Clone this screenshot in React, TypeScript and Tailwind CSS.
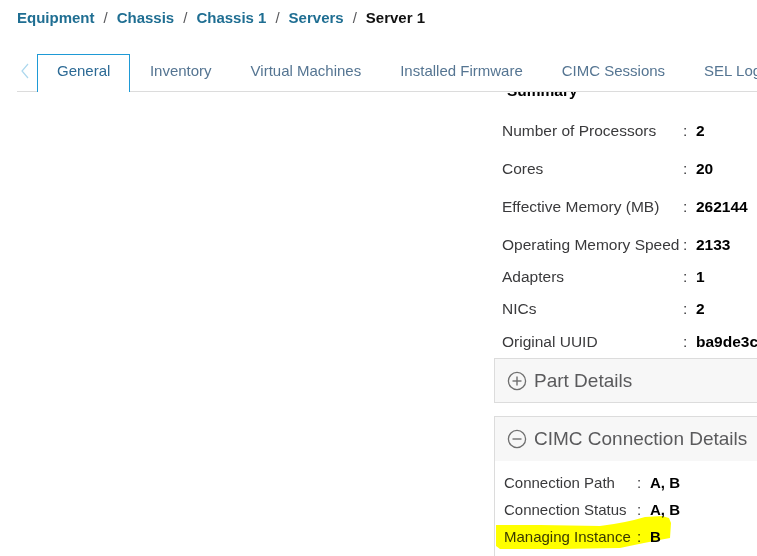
import React from "react";

const tabs = ["General", "Inventory", "Virtual Machines", "Installed Firmware", "CIMC Sessions", "SEL Logs"];

const summary: { label: string; value: string; cls: string }[] = [
  { label: "Number of Processors", value: "2", cls: "mt-[18px]" },
  { label: "Cores", value: "20", cls: "mt-[14px]" },
  { label: "Effective Memory (MB)", value: "262144", cls: "mt-[14px]" },
  { label: "Operating Memory Speed", value: "2133", cls: "mt-[14px]" },
  { label: "Adapters", value: "1", cls: "mt-[8px]" },
  { label: "NICs", value: "2", cls: "mt-[8px]" },
  { label: "Original UUID", value: "ba9de3cd-0000-0000-0000-000000000000", cls: "mt-[9px]" },
];

const cimc = [
  { label: "Connection Path", value: "A, B" },
  { label: "Connection Status", value: "A, B" },
  { label: "Managing Instance", value: "B" },
];

function CircleIcon({ plus }: { plus: boolean }) {
  return (
    <svg width="20" height="20" viewBox="0 0 20 20" className="flex-none">
      <circle cx="10" cy="10" r="8.6" fill="none" stroke="#6f6f6f" strokeWidth="1.3" />
      <line x1="5.5" y1="10" x2="14.5" y2="10" stroke="#6f6f6f" strokeWidth="1.4" />
      {plus && <line x1="10" y1="5.5" x2="10" y2="14.5" stroke="#6f6f6f" strokeWidth="1.4" />}
    </svg>
  );
}

export default function App() {
  return (
    <div className="relative w-[757px] h-[556px] overflow-hidden bg-white font-['Liberation_Sans',Arial,sans-serif]">
      <div className="pl-[17px] w-[1100px]">
        {/* Breadcrumb */}
        <div className="pt-[8px] flex items-center text-[15px] leading-[20px] font-bold">
          <span className="text-[#1f6e92]">Equipment</span>
          <span className="mx-[9px] font-normal text-[#58585b]">/</span>
          <span className="text-[#1f6e92]">Chassis</span>
          <span className="mx-[9px] font-normal text-[#58585b]">/</span>
          <span className="text-[#1f6e92]">Chassis 1</span>
          <span className="mx-[9px] font-normal text-[#58585b]">/</span>
          <span className="text-[#1f6e92]">Servers</span>
          <span className="mx-[9px] font-normal text-[#58585b]">/</span>
          <span className="text-[#111111]">Server 1</span>
        </div>

        {/* Tabs */}
        <div className="mt-[26px] flex items-end border-b border-[#dcdcdc] h-[38px]">
          <div className="w-[20px] h-[37px] flex items-center pb-[3px]">
            <svg width="10" height="16" viewBox="0 0 10 16" className="ml-[3px]">
              <polyline points="8,1 2,8 8,15" fill="none" stroke="#add8ee" strokeWidth="1.2" />
            </svg>
          </div>
          {tabs.map((t, i) =>
            i === 0 ? (
              <div
                key={t}
                className="relative -mb-px h-[38px] px-[19px] pt-[6px] border border-b-0 border-[#1e9ad6] bg-white text-[15px] leading-[20px] text-[#2c6a95] whitespace-nowrap"
              >
                {t}
              </div>
            ) : (
              <div
                key={t}
                className="h-[37px] px-[19.5px] pt-[7px] text-[15px] leading-[20px] text-[#557592] whitespace-nowrap"
              >
                {t}
              </div>
            )
          )}
        </div>

        {/* Content */}
        <div className="flex h-[470px] overflow-hidden">
          <div className="w-[477px] flex-none" />
          <div className="w-[340px] flex-none">
            <div className="-mt-[11px] pl-[13px] text-[15.5px] leading-[20px] font-bold text-black">Summary</div>
            <div className="pl-[8px]">
              {summary.map((r) => (
                <div key={r.label} className={`${r.cls} flex items-center h-[24px] text-[15.5px] leading-[20px] whitespace-nowrap`}>
                  <span className="w-[181px] flex-none text-[#3a3a3c]">{r.label}</span>
                  <span className="w-[13px] flex-none text-[#3a3a3c]">:</span>
                  <span className="font-bold text-black">{r.value}</span>
                </div>
              ))}
            </div>

            <div className="mt-[4px] h-[45px] border border-[#dcdcdc] bg-[#f7f7f7] flex items-center pl-[12px] gap-[7px]">
              <CircleIcon plus />
              <span className="text-[19px] leading-[24px] text-[#5a5a5c]">Part Details</span>
            </div>

            <div className="mt-[13px] border border-[#dcdcdc]">
              <div className="h-[44px] bg-[#f7f7f7] flex items-center pl-[12px] gap-[7px]">
                <CircleIcon plus={false} />
                <span className="text-[19px] leading-[24px] text-[#5a5a5c] whitespace-nowrap">CIMC Connection Details</span>
              </div>
              <div className="pt-[8px] pb-[20px] pl-[9px] bg-white">
                {cimc.map((r) => (
                  <div key={r.label} className="flex items-center h-[27px] text-[15px] leading-[20px] whitespace-nowrap">
                    <span className="w-[133px] flex-none text-[#3a3a3c]">{r.label}</span>
                    <span className="w-[13px] flex-none text-[#3a3a3c]">:</span>
                    <span className="font-bold text-black">{r.value}</span>
                  </div>
                ))}
              </div>
            </div>
          </div>
        </div>
      </div>

      {/* Yellow marker highlight */}
      <svg
        className="absolute left-0 top-0 pointer-events-none mix-blend-multiply"
        width="757"
        height="556"
        viewBox="0 0 757 556"
      >
        <path
          d="M496,525 L540,525 L600,526 Q625,523 645,517 L662,516 L669,518 L671,523 L670,538 Q648,542 620,548 L560,549 L500,549 L496,546 Z"
          fill="#ffff00"
        />
      </svg>
    </div>
  );
}
